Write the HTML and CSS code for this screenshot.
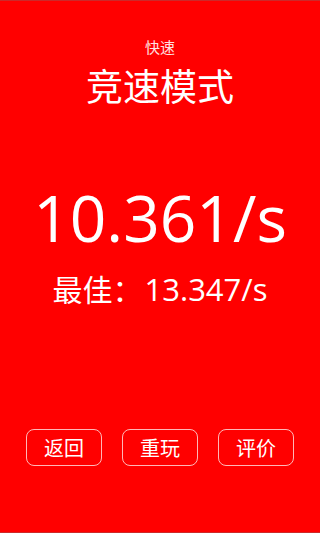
FILE: index.html
```
<!DOCTYPE html>
<html lang="zh-CN">
<head>
<meta charset="utf-8">
<title>竞速模式</title>
<link rel="stylesheet" href="styles.css">
</head>
<body>
<main class="screen">
  <header class="head">
    <div class="sub">快速</div>
    <h1 class="title">竞速模式</h1>
  </header>
  <section class="score">
    <div class="time">10.361/s</div>
    <div class="best"><span class="cjk">最佳</span><span class="colon">：</span>13.347/s</div>
  </section>
  <nav class="actions">
    <button class="btn">返回</button>
    <button class="btn">重玩</button>
    <button class="btn">评价</button>
  </nav>
</main>
</body>
</html>
```
FILE: styles.css
```
html, body {
  margin: 0;
  padding: 0;
}
body {
  background: #ff0000;
  color: #ffffff;
  font-family: "Open Sans", "Noto Sans CJK SC", sans-serif;
}
.screen {
  box-sizing: border-box;
  width: 320px;
  height: 533px;
  background: #ff0000;
  border-top: 1px solid #cc2a2a;
  border-bottom: 1px solid #cc2a2a;
  display: flex;
  flex-direction: column;
  align-items: center;
}
.head {
  display: flex;
  flex-direction: column;
  align-items: center;
  padding-top: 36px;
}
.sub {
  font-family: "Noto Sans CJK SC", sans-serif;
  font-size: 15px;
  line-height: 20px;
  color: #ffe0e0;
}
.title {
  margin: 6px 0 0 0;
  font-family: "Noto Sans CJK SC", sans-serif;
  font-weight: 400;
  font-size: 37px;
  line-height: 44px;
}
.score {
  display: flex;
  flex-direction: column;
  align-items: center;
  margin-top: 76px;
}
.time {
  font-size: 64px;
  line-height: 70px;
}
.best {
  margin-top: 17px;
  font-size: 31px;
  line-height: 36px;
}
.cjk {
  font-family: "Noto Sans CJK SC", sans-serif;
  font-size: 30px;
}
.colon {
  font-family: "Noto Sans CJK TC", sans-serif;
  font-size: 30px;
  margin-right: 2px;
}
.actions {
  margin-top: auto;
  margin-bottom: 66px;
  display: flex;
  gap: 20px;
}
.btn {
  box-sizing: border-box;
  width: 76px;
  height: 37px;
  padding: 0;
  background: transparent;
  border: 1px solid rgba(255, 255, 255, 0.72);
  border-radius: 8px;
  color: #ffffff;
  font-family: "Noto Sans CJK SC", sans-serif;
  font-size: 20px;
  line-height: 35px;
}
```
